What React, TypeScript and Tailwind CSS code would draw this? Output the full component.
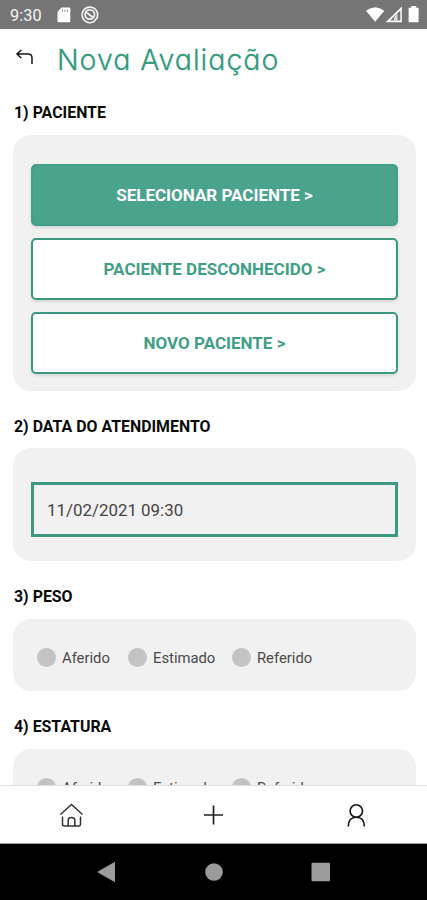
import type { ReactNode } from "react";

function SectionTitle({ children }: { children: ReactNode }) {
  return <h2 className="ml-[14px] flex h-[22px] items-center text-[15.9px] font-bold text-[#0b0b0b]">{children}</h2>;
}

function PatientButton({ children, filled = false }: { children: ReactNode; filled?: boolean }) {
  return (
    <button
      className={
        filled
          ? "flex h-[62px] w-full items-center justify-center rounded-[5px] border-2 border-[#43a088] bg-[#4aa38d] pt-[2px] text-[17px] font-bold text-white shadow-[0_2px_3px_rgba(0,0,0,0.1)]"
          : "flex h-[62px] w-full items-center justify-center rounded-[5px] border-2 border-[#3a9a80] bg-white pt-[2px] text-[17px] font-bold text-[#3f9f84] shadow-[0_2px_3px_rgba(0,0,0,0.1)]"
      }
    >
      {children}
    </button>
  );
}

function Option({ label, className }: { label: string; className: string }) {
  return (
    <div className={`flex items-center gap-[6px] ${className}`}>
      <span className="size-[19px] shrink-0 rounded-full bg-[#c3c3c3]" />
      <span className="pt-px text-[14.8px] leading-5 whitespace-nowrap text-[#4a4a4a]">{label}</span>
    </div>
  );
}

function Options() {
  return (
    <div className="mr-[11px] ml-[13px] flex h-[72.5px] shrink-0 rounded-[18px] bg-[#f1f1f1] pt-[29px] pl-[24px]">
      <Option label="Aferido" className="h-5 w-[91px]" />
      <Option label="Estimado" className="h-5 w-[104px]" />
      <Option label="Referido" className="h-5" />
    </div>
  );
}

export default function App() {
  return (
    <div className="flex h-[900px] w-[427px] flex-col overflow-hidden bg-white font-['Roboto',sans-serif]">
      <div className="flex h-[28.5px] shrink-0 items-center bg-[#757575] text-white">
        <span className="ml-[10px] w-[47px] pt-[3px] text-[16.3px] tracking-[0.1px] text-[#f5f5f5]">9:30</span>
        <svg className="h-[28px] w-[50px]" viewBox="57 0 50 28">
          <path d="M61.5 7.500h7.8q1 0 1 1v12.700q0 1-1 1H58.500q-1 0-1-1V12z" fill="#fff" />
          <path d="M62.500 9.500v2.500M65 9.500v2.500M67.500 9.500v2.500" stroke="#999" strokeWidth="1" />
          <path d="M94.500 21.200A7.800 7.800 0 1 1 97 18.100L93.500 22" fill="none" stroke="#f2f2f2" strokeWidth="1.6" />
          <circle cx="89.800" cy="14.500" r="4.700" fill="none" stroke="#f2f2f2" strokeWidth="1.8" />
          <path d="M86.200 12.200l6.500 5" stroke="#f2f2f2" strokeWidth="1.8" />
        </svg>
        <svg className="ml-auto h-[28px] w-[62px]" viewBox="365 0 62 28">
          <path d="M366 10.800Q375.200 3.500 384.300 10.800L375.200 21.800z" fill="#fff" />
          <path d="M401.800 6.600V22.200H385.700z" fill="#fff" />
          <path d="M400.300 10.500v10h-10.300z" fill="#757575" />
          <path d="M397.500 13.500v7h-3.500v-3z" fill="#ddd" />
          <path d="M411.200 6h5v1.800h2.400V22.200h-10V7.800h2.600z" fill="#fff" />
        </svg>
      </div>
      <header className="flex h-[72px] shrink-0">
        <svg className="mt-[20px] ml-[15px] h-[18px] w-[20px]" viewBox="0 0 20 18" fill="none" stroke="#151515" strokeWidth="1.5">
          <path d="M17 15V9q0-4-4-4H2M6.300 1L2 5l4.300 4" />
        </svg>
        <h1 className="ml-[22px] pt-[11px] font-['Inter',sans-serif] text-[28.5px] leading-[40px] font-light tracking-[0.98px] whitespace-nowrap text-[#32997d] [-webkit-text-stroke:0.3px_#32997d] [font-feature-settings:'cv11'_1]">
          Nova Avaliação
        </h1>
      </header>
      <main className="flex min-h-0 flex-1 flex-col overflow-hidden">
        <div className="flex h-[34px] shrink-0 items-start pt-[1px]"><SectionTitle>1) PACIENTE</SectionTitle></div>
        <section className="mr-[11px] ml-[13px] flex h-[256px] shrink-0 flex-col gap-[12px] rounded-[18px] bg-[#f1f1f1] px-[18px] pt-[29px]">
          <PatientButton filled>SELECIONAR PACIENTE &gt;</PatientButton>
          <PatientButton>PACIENTE DESCONHECIDO &gt;</PatientButton>
          <PatientButton>NOVO PACIENTE &gt;</PatientButton>
        </section>
        <div className="flex h-[57.5px] shrink-0 items-start pt-[25px]"><SectionTitle>2) DATA DO ATENDIMENTO</SectionTitle></div>
        <section className="mr-[11px] ml-[13px] h-[113px] shrink-0 rounded-[18px] bg-[#f1f1f1] px-[18px] pt-[34px]">
          <div className="flex h-[55px] items-center border-3 border-[#3c9a81] pt-[2px] pl-[13px] text-[16.900px] text-[#444]">11/02/2021 09:30</div>
        </section>
        <div className="flex h-[57.5px] shrink-0 items-start pt-[25px]"><SectionTitle>3) PESO</SectionTitle></div>
        <Options />
        <div className="flex h-[57.5px] shrink-0 items-start pt-[25px]"><SectionTitle>4) ESTATURA</SectionTitle></div>
        <Options />
      </main>
      <nav className="grid h-[59px] shrink-0 grid-cols-3 border-t border-b border-t-[#dedede] border-b-[#999] bg-white">
        <svg className="mt-[16px] h-[26px] w-[26px] justify-self-center" viewBox="0 0 26 26" fill="none" stroke="#333" strokeWidth="1.5">
          <path d="M2.500 12.500L13.500 2.500l11 10M4.500 14.500V22q0 2 2 2h14q2 0 2-2v-7.500M10.200 24v-6q0-2.500 3.300-2.500t3.300 2.500V24" />
        </svg>
        <svg className="mt-[16px] h-[26px] w-[26px] justify-self-center" viewBox="0 0 26 26" stroke="#222" strokeWidth="1.7">
          <path d="M13.500 3.500v19M4 13h19" />
        </svg>
        <svg className="mt-[16px] h-[26px] w-[26px] justify-self-center" viewBox="0 0 26 26" fill="none" stroke="#151515" strokeWidth="1.6">
          <circle cx="13.300" cy="9" r="6.200" />
          <path d="M5.300 24.500q0-9.200 8-9.200t8 9.200" />
        </svg>
      </nav>
      <div className="flex h-[56px] shrink-0 items-center bg-black">
        <svg className="h-[56px] w-[427px]" viewBox="0 0 427 56" fill="#9b9b9b">
          <path d="M97 28l18-10.200v20.400z" />
          <circle cx="214" cy="28" r="8.800" />
          <rect x="311.500" y="18.800" width="18.500" height="18.500" rx="1" />
        </svg>
      </div>
    </div>
  );
}
